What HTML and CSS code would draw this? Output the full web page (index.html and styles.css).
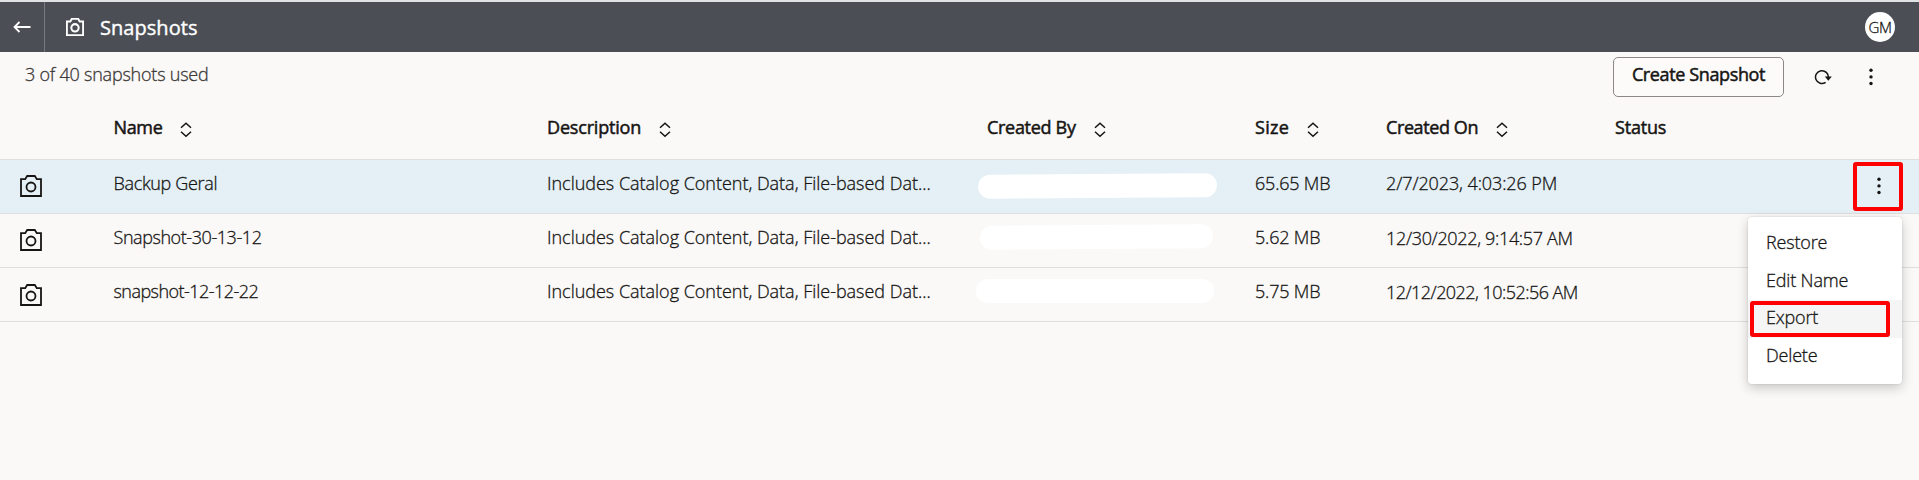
FILE: index.html
```
<!DOCTYPE html>
<html lang="en">
<head>
<meta charset="utf-8">
<title>Snapshots</title>
<link rel="stylesheet" href="styles.css">
</head>
<body>
<svg class="defs" width="0" height="0">
  <symbol id="camera" viewBox="0 0 22 22"><path d="M1 4.2H5.2L7.2 1H14.8L16.8 4.2H21V21H1Z"/><circle cx="11" cy="12" r="4.5"/></symbol>
  <symbol id="sort" viewBox="0 0 12 16"><path d="M1 5.7 6 1.2l5 4.5M1 9.8l5 4.5 5-4.5"/></symbol>
  <symbol id="dots" viewBox="0 0 4 18"><circle cx="2" cy="2.2" r="1.7"/><circle cx="2" cy="8.9" r="1.7"/><circle cx="2" cy="15.5" r="1.7"/></symbol>
</svg>
<header class="topbar">
  <div class="back"><svg width="18" height="12" viewBox="0 0 18 12"><path d="M17.5 6H2M6.5 1 1.5 6l5 5"/></svg></div>
  <svg class="title-icon" width="18" height="18"><use href="#camera"/></svg>
  <h1 class="title">Snapshots</h1>
  <div class="avatar">GM</div>
</header>
<div class="toolbar">
  <span class="usage">3 of 40 snapshots used</span>
  <button class="create">Create Snapshot</button>
  <svg class="refresh" width="18" height="16" viewBox="0 0 18 16"><path class="arc" d="M11.6 13.3A6.4 6.4 0 1 1 14.3 8.6"/><path class="head-arrow" d="M10.8 7.6H17.8L14.3 11.7Z"/></svg>
  <svg class="dots" width="4" height="18"><use href="#dots"/></svg>
</div>
<main class="table">
  <div class="row head">
    <span></span>
    <span class="cell name">Name<svg class="sort"><use href="#sort"/></svg></span>
    <span class="cell">Description<svg class="sort"><use href="#sort"/></svg></span>
    <span class="cell by">Created By<svg class="sort"><use href="#sort"/></svg></span>
    <span class="cell size">Size<svg class="sort"><use href="#sort"/></svg></span>
    <span class="cell on">Created On<svg class="sort"><use href="#sort"/></svg></span>
    <span class="cell">Status</span>
    <span></span>
  </div>
  <div class="row selected">
    <svg class="camera" width="22" height="22"><use href="#camera"/></svg>
    <span class="cell snug">Backup Geral</span>
    <span class="cell desc">Includes Catalog Content, Data, File-based Dat...</span>
    <span class="redacted r1"></span>
    <span class="cell size-value">65.65 MB</span>
    <span class="cell">2/7/2023, 4:03:26 PM</span>
    <span></span>
    <div class="actions">
      <svg class="dots" width="4" height="18"><use href="#dots"/></svg>
      <div class="mark mark-dots"></div>
      <div class="menu">
        <div class="item">Restore</div>
        <div class="item">Edit Name</div>
        <div class="item active">Export<div class="mark mark-item"></div></div>
        <div class="item">Delete</div>
      </div>
    </div>
  </div>
  <div class="row">
    <svg class="camera" width="22" height="22"><use href="#camera"/></svg>
    <span class="cell tighter-name">Snapshot-30-13-12</span>
    <span class="cell desc">Includes Catalog Content, Data, File-based Dat...</span>
    <span class="redacted r2"></span>
    <span class="cell size-value">5.62 MB</span>
    <span class="cell date snugger">12/30/2022, 9:14:57 AM</span>
  </div>
  <div class="row">
    <svg class="camera low" width="22" height="22"><use href="#camera"/></svg>
    <span class="cell tight">snapshot-12-12-22</span>
    <span class="cell desc">Includes Catalog Content, Data, File-based Dat...</span>
    <span class="redacted r3"></span>
    <span class="cell size-value">5.75 MB</span>
    <span class="cell date tight">12/12/2022, 10:52:56 AM</span>
  </div>
</main>
</body>
</html>
```
FILE: styles.css
```
* { box-sizing: border-box; }
body {
  margin: 0;
  height: 480px;
  overflow: hidden;
  background: #fbf9f8;
  color: #161513;
  font: 300 18px/24px "Open Sans", "Noto Sans", sans-serif;
  -webkit-text-stroke: .3px;
  white-space: nowrap;
}
svg { fill: none; stroke: #161513; stroke-width: 1.8; flex: none; }
.defs { position: absolute; }

.topbar {
  display: flex;
  align-items: center;
  height: 52px;
  padding-right: 24px;
  border-top: 2px solid #e1e2e4;
  background: #4b4e55;
  color: #fff;
}
.topbar svg { stroke: #fff; }
.back {
  display: flex;
  align-items: center;
  width: 45px;
  height: 50px;
  padding-left: 13px;
  border-right: 1px solid #77797e;
}
.title-icon { margin-left: 21px; stroke-width: 2.5; }
.title { margin: 2px 0 0 16px; font-size: 20px; font-weight: 500; letter-spacing: .05px; -webkit-text-stroke: .4px; }
.avatar {
  width: 30px;
  height: 30px;
  margin-left: auto;
  border-radius: 50%;
  background: #fff;
  color: #161513;
  font-size: 15px;
  line-height: 31px;
  letter-spacing: -.5px;
  text-align: center;
}

.toolbar { display: flex; height: 58px; padding: 5px 46px 0 25px; }
.usage { padding-top: 5px; letter-spacing: -.22px; color: #3a3835; }
.create {
  width: 171px;
  height: 40px;
  margin-left: auto;
  padding: 0 0 7px;
  border: 1px solid #8b8885;
  border-radius: 5px;
  background: #fdfbfa;
  color: #161513;
  font: 500 18px/24px "Open Sans", sans-serif;
  letter-spacing: -.37px;
  -webkit-text-stroke: .5px;
}
.refresh { margin: 12px 0 0 30px; }
.refresh .arc { stroke-width: 1.5; }
.refresh .head-arrow { fill: #161513; stroke: none; }
.dots { fill: #161513; stroke: none; }
.toolbar .dots { margin: 11px 0 0 37px; }

.row {
  display: grid;
  grid-template-columns: 113.5px 433.5px 440px 268px 131px 229px 254px 50px;
  height: 54px;
  border-bottom: 1px solid #e1dfde;
}
.row.head { height: 50px; font-weight: 500; -webkit-text-stroke: .5px; }
.head .cell { display: flex; padding-top: 5px; letter-spacing: -.18px; }
.head .name { letter-spacing: -.35px; }
.head .by { letter-spacing: -.3px; }
.head .on { letter-spacing: -.4px; }
.head .size { letter-spacing: .3px; }
.sort { width: 12px; height: 16px; margin: 7px 0 0 18px; stroke-width: 1.5; }
.selected { background: #e4f0f6; }
.cell { padding-top: 11px; letter-spacing: -.1px; }
.desc { letter-spacing: -.02px; }
.snug { letter-spacing: -.32px; }
.snugger { letter-spacing: -.33px; }
.tighter-name { letter-spacing: -.43px; }
.tight { letter-spacing: -.54px; }
.size-value { letter-spacing: -.2px; }
.date { padding-top: 12px; }
.camera { margin: 15px 0 0 20px; }
.camera.low { margin-top: 16px; }

/* Hand-brushed strokes that hide the author names */
.redacted { height: 24px; border-radius: 12px; background: #fff; }
.r1 { width: 239px; margin: 14px 0 0 -9px; transform: rotate(-.4deg); }
.r2 { width: 233px; margin: 11px 0 0 -7px; transform: rotate(-.35deg); }
.r3 { width: 238px; margin: 11px 0 0 -11px; }

.actions { position: relative; }
.actions .dots { display: block; margin: 17px 0 0 8px; }
.mark { position: absolute; border: 4px solid #fe0000; border-radius: 3px; }
.mark-dots { top: 2px; left: -16px; width: 50px; height: 49px; }
.menu {
  position: absolute;
  z-index: 1;
  top: 57px;
  left: -121px;
  width: 154px;
  height: 167px;
  padding-top: 7px;
  border-radius: 4px;
  background: #fff;
  box-shadow: 0 4px 12px rgba(0, 0, 0, .2), 0 0 2px rgba(0, 0, 0, .15);
}
.item { position: relative; height: 38px; padding: 6px 0 0 18px; letter-spacing: -.17px; }
.item.active { background: #f5f5f5; }
.item.active, .item.active ~ .item { padding-top: 5px; }
.mark-item { top: 1px; left: 2px; width: 140px; height: 36px; }
```
